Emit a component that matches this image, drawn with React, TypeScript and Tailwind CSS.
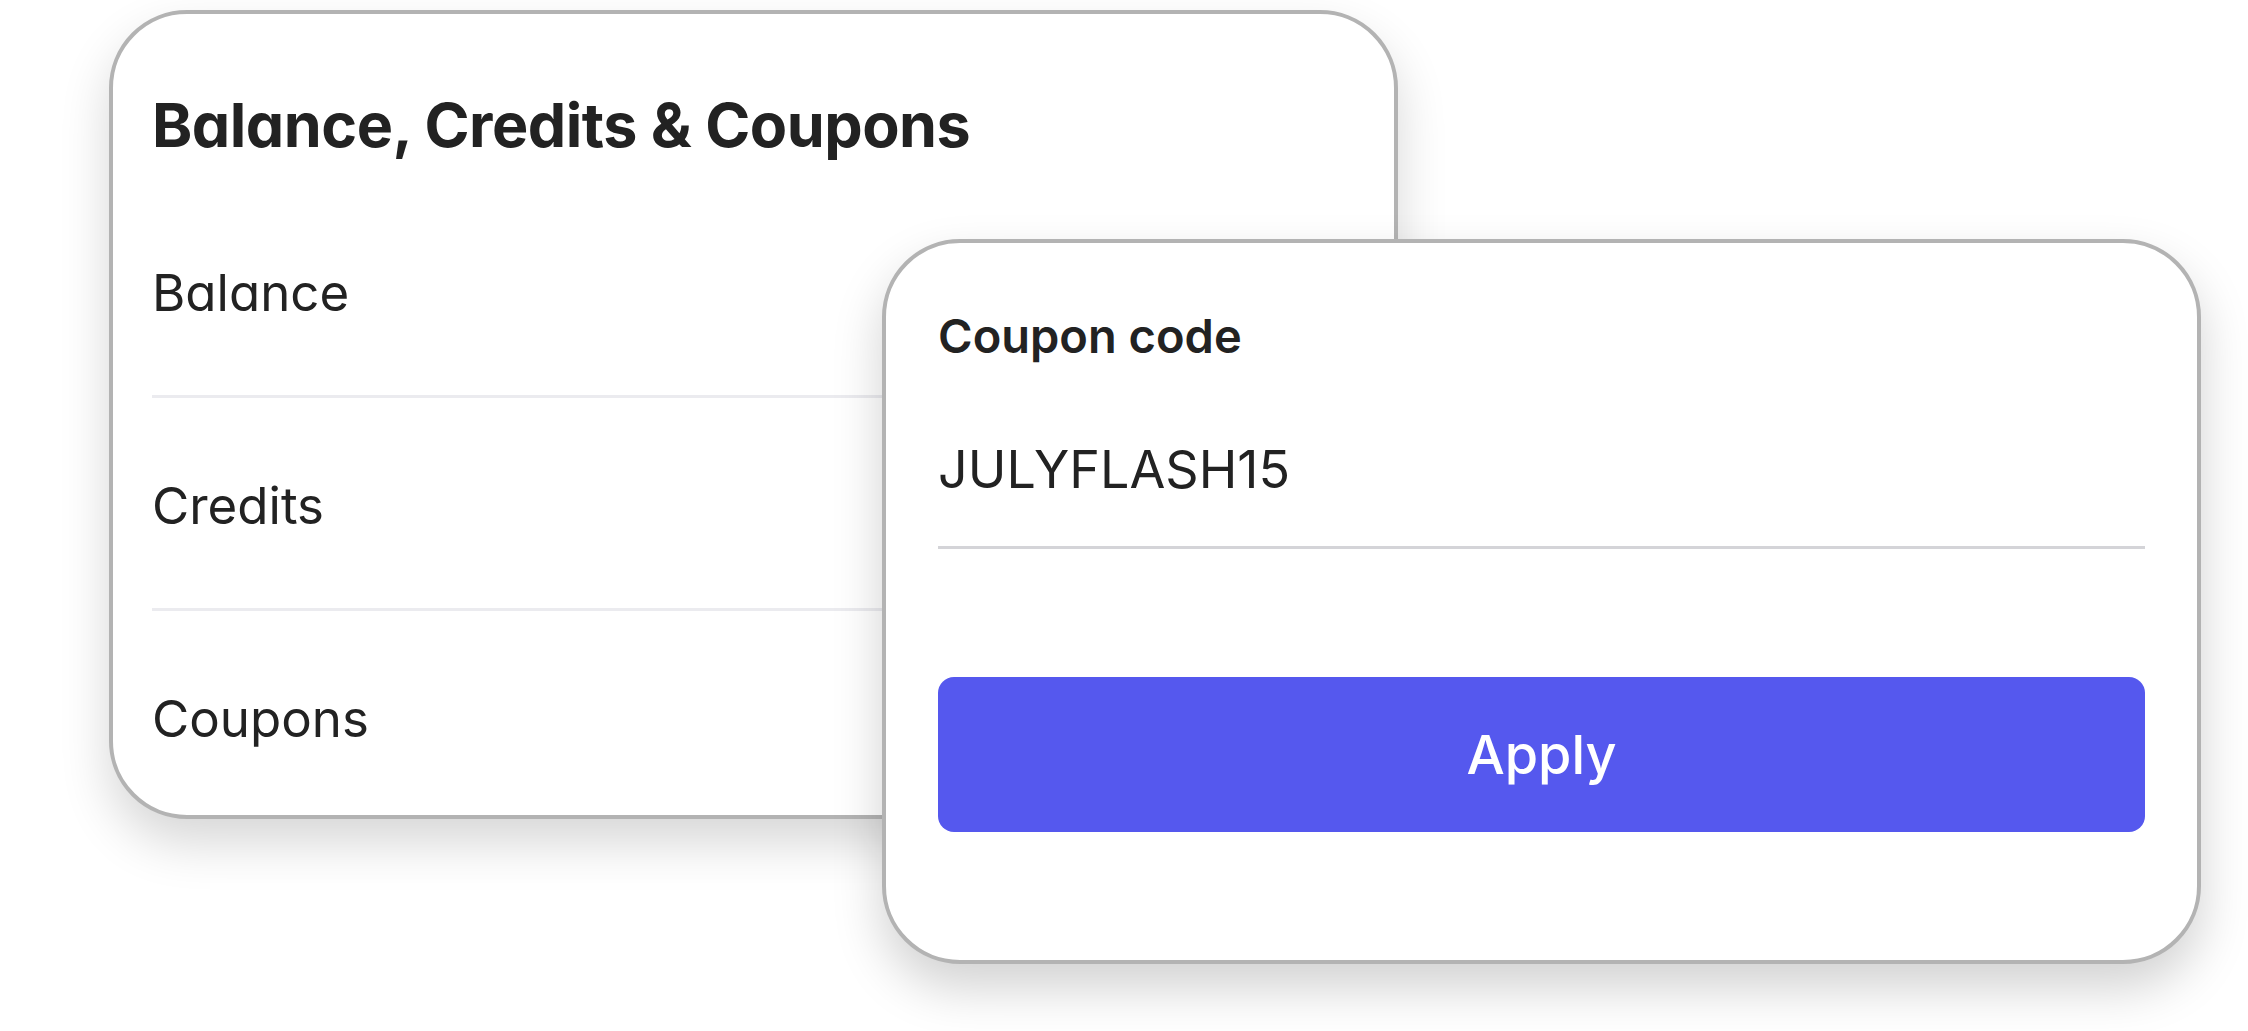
const rows = ['Balance', 'Credits', 'Coupons'];

function SummaryCard() {
  return (
    <div className="w-[1289px] h-[809px] rounded-[78px] border-4 border-[#b3b3b3] bg-white shadow-[0_24px_50px_rgba(0,0,0,0.16)] pl-[39px] pr-[60px] pt-[81px] overflow-hidden">
      <h2 className="text-[61px] leading-[61px] font-bold text-[#222222] tracking-[-0.5px]">
        Balance, Credits &amp; Coupons
      </h2>
      <div className="mt-[29px]">
        {rows.map((label, i) => (
          <div
            key={label}
            className={
              i < rows.length - 1
                ? 'pt-[82px] pb-[76px] border-b-[3px] border-[#ebebef]'
                : 'pt-[82px]'
            }
          >
            <div className="text-[51px] leading-[52px] text-[#222222]">{label}</div>
          </div>
        ))}
      </div>
    </div>
  );
}

function CouponCard() {
  return (
    <div className="absolute left-[882px] top-[239px] w-[1319px] h-[725px] rounded-[78px] border-4 border-[#b3b3b3] bg-white shadow-[0_24px_50px_rgba(0,0,0,0.18)] px-[52px] pt-[70px]">
      <div className="text-[47px] leading-[46px] font-semibold text-[#222222]">Coupon code</div>
      <div className="mt-[84px] pb-[49px] border-b-[3px] border-[#d4d4d8]">
        <div className="text-[52px] leading-[54px] text-[#222222]">JULYFLASH15</div>
      </div>
      <button className="mt-[128px] w-full h-[155px] rounded-[16px] bg-[#5558ee] flex items-center justify-center text-[54px] font-medium text-white">
        Apply
      </button>
    </div>
  );
}

export default function App() {
  return (
    <div className="relative w-[2248px] h-[1031px] overflow-hidden bg-white pt-[10px] pl-[109px] [font-family:Inter,'Noto_Sans',sans-serif] [font-feature-settings:'cv11']">
      <SummaryCard />
      <CouponCard />
    </div>
  );
}
